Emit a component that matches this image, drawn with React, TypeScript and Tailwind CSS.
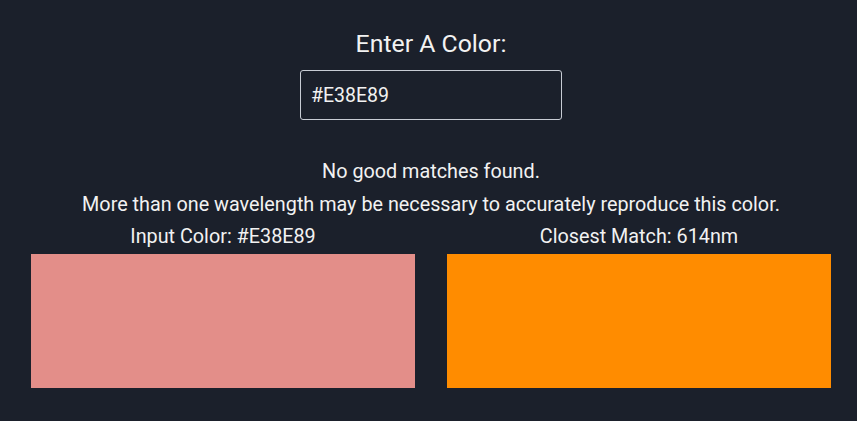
import React from "react";

export default function App() {
  return (
    <div
      className="min-h-[421px] w-full bg-[#1b202b] text-[#f2f2f2] pl-[31px] pr-[26px]"
      style={{ fontFamily: "Roboto, 'Noto Sans', sans-serif" }}
    >
      <div className="flex flex-col items-center pt-[30px]">
        <h1 className="text-[24.8px] leading-[28px] font-normal">Enter A Color:</h1>
        <input
          className="mt-[12px] w-[262px] h-[50px] rounded-[3px] border border-[#c8ccd4] bg-transparent px-[10px] text-[19.5px] text-[#f2f2f2] outline-none"
          defaultValue="#E38E89"
        />
        <p className="mt-[40px] text-[19.8px] leading-[24px]">No good matches found.</p>
        <p className="mt-[9px] text-[19.8px] leading-[24px]">
          More than one wavelength may be necessary to accurately reproduce this color.
        </p>
      </div>
      <div className="mt-[8px] grid grid-cols-2 gap-[32px]">
        <div className="flex flex-col items-center">
          <div className="text-[19.8px] leading-[24px] mb-[5px]">Input Color: #E38E89</div>
          <div className="w-full h-[134px] bg-[#E38E89]" />
        </div>
        <div className="flex flex-col items-center">
          <div className="text-[19.8px] leading-[24px] mb-[5px]">Closest Match: 614nm</div>
          <div className="w-full h-[134px] bg-[#FF8C00]" />
        </div>
      </div>
    </div>
  );
}
